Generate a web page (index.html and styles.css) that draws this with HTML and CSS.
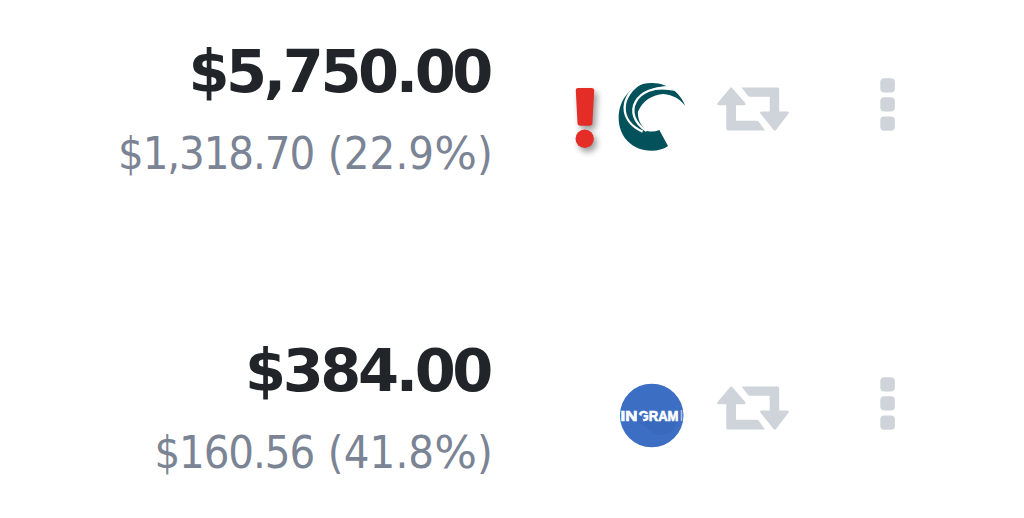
FILE: index.html
```
<!DOCTYPE html>
<html lang="en">
<head>
  <meta charset="UTF-8">
  <meta name="viewport" content="width=device-width, initial-scale=1.0">
  <title>Quote Totals</title>
  <link rel="stylesheet" href="styles.css">
</head>
<body>
  <!-- Shared icons -->
  <svg class="sprite" aria-hidden="true">
    <symbol id="swap" viewBox="0 0 72 44">
      <path d="M13.2.9Q14.2-.3 15.2.9L28 15.8Q29.5 18.3 27 18.3H19V33.8H39.5Q41 33.8 42 34.9L48 43.6H11Q9.3 43.6 9.3 41.9V18.3H2Q-1 18.3.8 15.8Z"/>
      <path d="M24.5.6H60.5Q62.2.6 62.2 2.3V24.5H70Q73 24.5 71.2 27L59 43Q57.8 44.4 56.6 43L43.8 27Q42 24.5 44.8 24.5H52.7V9.8H33Q31.7 9.8 30.7 8.6Z"/>
    </symbol>
    <symbol id="more" viewBox="0 0 16 54">
      <rect x="0.3" y="0.2" width="14.6" height="14.3" rx="4"/>
      <rect x="0.3" y="19.3" width="14.6" height="14.3" rx="4"/>
      <rect x="0.3" y="38.5" width="14.6" height="14.3" rx="4"/>
    </symbol>
  </svg>

  <div class="rows">
    <div class="row">
      <div class="amounts">
        <div class="price">$5,750.00</div>
        <div class="margin">$1,318.70 <span class="percent">(22.9<span class="sign">%</span>)</span></div>
      </div>
      <svg class="alert" viewBox="0 0 20 60">
        <path d="M3 0H16.5Q19.3 0 19.2 2.8L17.4 35Q17.2 37.8 14.4 37.8H5.4Q2.7 37.8 2.5 35L.8 2.8Q.6 0 3 0Z"/>
        <circle cx="9.7" cy="50.7" r="9.2"/>
      </svg>
      <svg class="vendor" viewBox="0 0 204 204">
        <path class="teal" d="M202 69C190 35 155 1 103 0C40-1 2 50 2 105C2 160 42 203 100 203C120 203 136 199 150 189L124 141C112 146 100 147 88 144C68 128 58 108 60 86C74 52 104 35 136 33C165 35 188 50 202 69Z"/>
        <path class="gap" d="M74-2C6 34-2 112 74 146"/>
        <path class="gap" d="M160 18C54 0 6 95 86 144"/>
        <path class="notch" d="M170 24L152 9Q122 9 94 21Q132 14 170 24Z"/>
      </svg>
      <svg class="swap"><use href="#swap"/></svg>
      <svg class="more"><use href="#more"/></svg>
    </div>

    <div class="row">
      <div class="amounts">
        <div class="price">$384.00</div>
        <div class="margin">$160.56 <span class="percent">(41.8<span class="sign">%</span>)</span></div>
      </div>
      <svg class="vendor" viewBox="0 0 68 68">
        <circle class="blue" cx="33.7" cy="33.5" r="31.8"/>
        <path class="shade" d="M19 39H60L54 50Q42 57 33 49Z"/>
        <text class="brand" x="2.5" y="38.5" textLength="17" lengthAdjust="spacingAndGlyphs">IN</text>
        <text class="brand" x="20.5" y="38.5" textLength="40" lengthAdjust="spacingAndGlyphs">GRAM</text>
        <path class="blue" d="M19 31.5L24 34.5L25.5 39.5H19Z"/>
        <path class="edge" d="M63.5 28V39"/>
      </svg>
      <svg class="swap"><use href="#swap"/></svg>
      <svg class="more"><use href="#more"/></svg>
    </div>
  </div>
</body>
</html>
```
FILE: styles.css
```
body {
  margin: 0;
  background: #ffffff;
  font-family: 'DejaVu Sans', sans-serif;
}

.sprite {
  display: none;
}

.rows {
  height: 518px;
  overflow: hidden;
}

.row {
  display: flex;
  align-items: flex-start;
  height: 299px;
}

.amounts {
  width: 492px;
  margin-right: auto;
  text-align: right;
  white-space: nowrap;
}

.price {
  margin-top: 37px;
  padding-right: 2px;
  font-size: 59px;
  line-height: 70px;
  font-weight: bold;
  letter-spacing: -3.4px;
  color: #212529;
}

.margin {
  margin-top: 20px;
  font-family: 'DejaVu Sans Condensed', 'DejaVu Sans', sans-serif;
  font-stretch: condensed;
  font-size: 45px;
  line-height: 54px;
  letter-spacing: -1.1px;
  color: #7b8494;
}

.percent {
  margin-left: 2px;
  margin-right: -1px;
  letter-spacing: 0.1px;
}

.sign {
  font-family: 'DejaVu Sans', sans-serif;
  font-stretch: normal;
}

.alert {
  width: 20px;
  height: 60px;
  margin: 88px 23px 0 0;
  overflow: visible;
  fill: #e52d27;
  filter: drop-shadow(3px 4px 3px rgba(0, 0, 0, 0.4));
}

.vendor {
  width: 68px;
  height: 68px;
  margin: 83px 31px 0 0;
}

.teal {
  fill: #03515b;
}

.gap {
  fill: none;
  stroke: #ffffff;
  stroke-width: 7;
}

.notch {
  fill: #ffffff;
}

.blue {
  fill: #3c6fc4;
}

.shade {
  fill: #3563b4;
  opacity: 0.5;
}

.brand {
  font-family: 'Liberation Sans', sans-serif;
  font-size: 14px;
  font-weight: bold;
  fill: #ffffff;
  stroke: #ffffff;
  stroke-width: 0.6;
}

.edge {
  stroke: #ffffff;
  stroke-width: 1.5;
  opacity: 0.6;
}

.swap {
  width: 72px;
  height: 44px;
  margin: 87px 91px 0 0;
  fill: #ced4d9;
}

.more {
  width: 16px;
  height: 54px;
  margin: 78px 128px 0 0;
  fill: #ced4d9;
}
```
